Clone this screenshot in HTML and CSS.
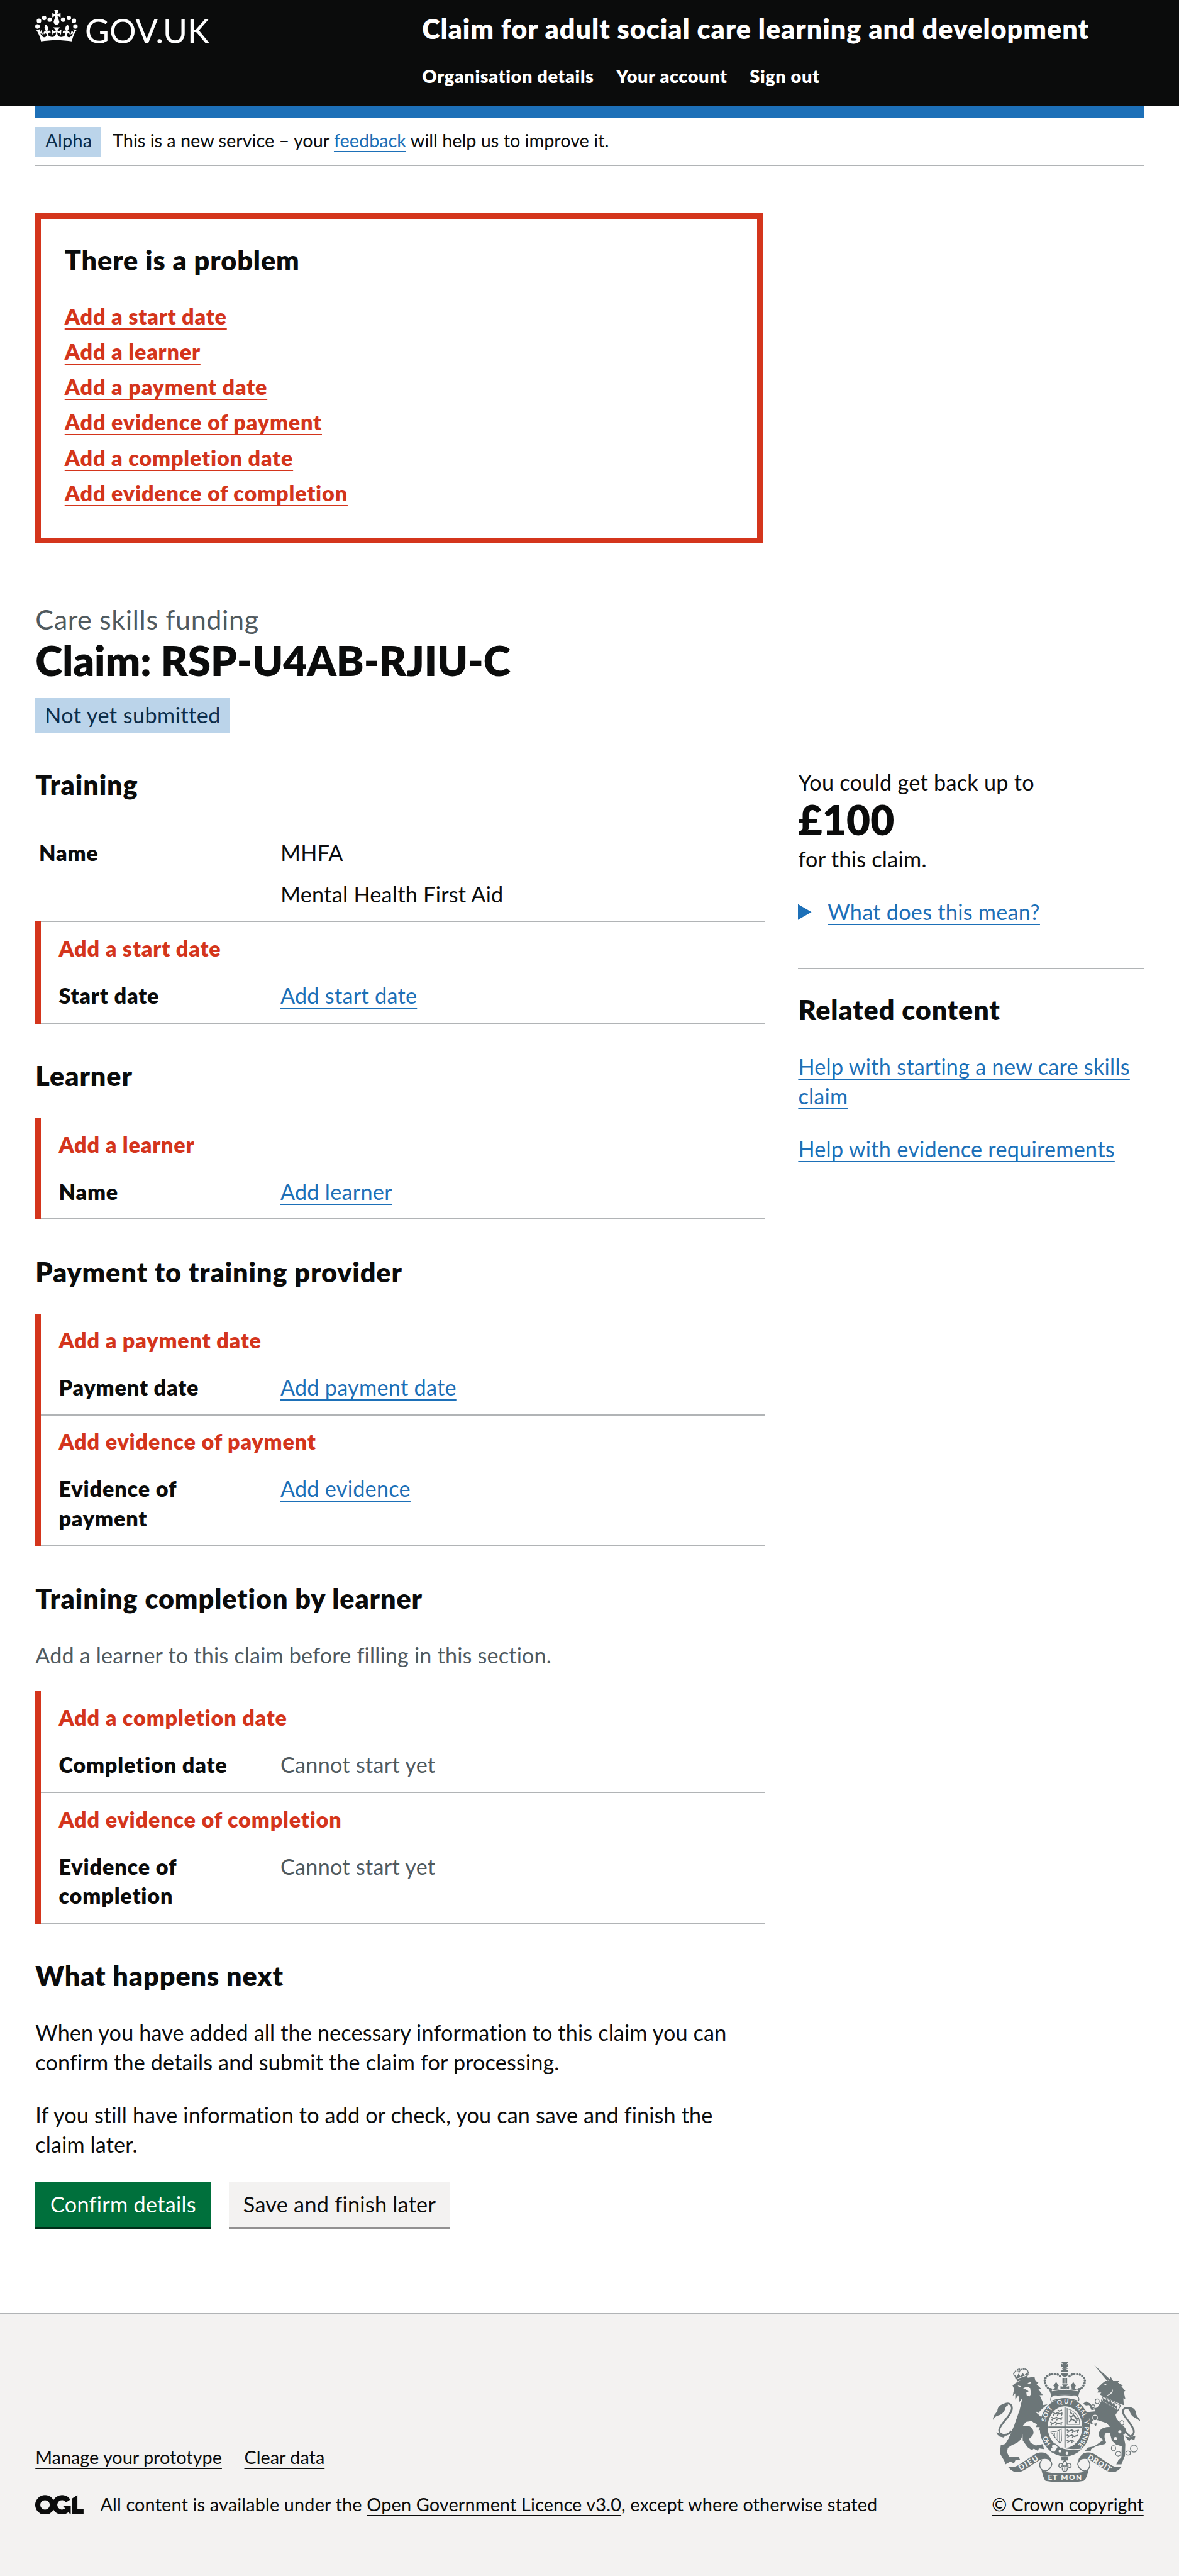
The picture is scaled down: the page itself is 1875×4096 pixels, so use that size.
FILE: index.html
```html
<!DOCTYPE html>
<html lang="en">
<head>
<meta charset="utf-8">
<title>Claim for adult social care learning and development</title>
<link rel="stylesheet" href="styles.css">
</head>
<body>
<header class="header">
  <a class="logo" aria-label="GOV.UK">
    <svg class="logo-svg" viewBox="60 0 924 276" fill="#fff">
      <circle cx="71.500" cy="134.500" r="11.500"/><circle cx="79" cy="106" r="11.500"/><circle cx="105.500" cy="91.500" r="11.500"/><circle cx="134" cy="100" r="11.500"/>
      <circle cx="264.500" cy="134.500" r="11.500"/><circle cx="257" cy="106" r="11.500"/><circle cx="231" cy="91.500" r="11.500"/><circle cx="202" cy="100" r="11.500"/>
      <path transform="translate(65.900 51) scale(6.380)" d="M17 4.700l2.300 1.200V2.500l-2.300.7-.2-.2.9-3h-3.400l.9 3-.2.2c-.1.1-2.300-.7-2.300-.7v3.400L15 4.700c.1.1.1.2.2.2l-1.300 4c-.1.2-.1.4-.1.6 0 1.100.8 2 1.900 2.200h.7c1-.2 1.900-1.100 1.900-2.100 0-.2 0-.4-.1-.6l-1.300-4c-.1-.2 0-.2.1-.3"/>
      <path transform="translate(65.900 18.600) scale(6.380)" d="M16 29.200c4.400 0 8.600.3 12.300.8 1.100-4.500 2.400-7 3.700-8.800l-2.500-.9c.2 1.300.3 1.900 0 2.700-.4-.4-.8-1.100-1.100-2.300l-1.200 4c.7-.5 1.300-.8 2-.9-1.100 2.500-2.600 3.100-3.500 3-1.100-.2-1.700-1.200-1.500-2.100.3-1.200 1.500-1.500 2.100-.1 1.100-2.300-.8-3-2-2.300 1.900-1.900 2.100-3.500.6-5.600-2.100 1.600-2.100 3.200-1.200 5.500-1.200-1.400-3.200-.6-2.500 1.600.9-1.400 2.100-.5 1.900.8-.2 1.100-1.700 2.100-3.500 1.900-2.700-.2-2.900-2.100-2.900-3.600.7-.1 1.900.5 2.900 1.900l.4-4.300c-1.100 1.100-2.100 1.400-3.200 1.400.4-1.200 2.100-3 2.100-3h-5.400s1.700 1.900 2.100 3c-1.100 0-2.100-.2-3.200-1.400l.4 4.300c1-1.400 2.200-2 2.900-1.900-.1 1.500-.2 3.400-2.900 3.600-1.900.2-3.400-.8-3.500-1.900-.2-1.300 1-2.200 1.900-.8.7-2.300-1.200-3-2.500-1.600.9-2.200.9-3.900-1.200-5.500-1.500 2-1.300 3.700.6 5.600-1.200-.7-3.100 0-2 2.300.6-1.400 1.800-1.100 2.100.1.2.9-.3 1.900-1.500 2.100-.9.2-2.400-.5-3.500-3 .6 0 1.200.3 2 .9l-1.200-4c-.3 1.100-.7 1.900-1.100 2.300-.3-.8-.2-1.400 0-2.700l-2.900.9C1.300 23 2.600 25.500 3.700 30c3.700-.5 7.900-.8 12.300-.8"/>
      <text class="logo-text" x="313" y="222" textLength="634" lengthAdjust="spacingAndGlyphs">GOV.UK</text>
    </svg>
  </a>
  <div class="header-content">
    <div class="service">Claim for adult social care learning and development</div>
    <nav class="nav"><a>Organisation details</a><a>Your account</a><a>Sign out</a></nav>
  </div>
</header>
<div class="page">
  <div class="phase">
    <strong class="tag tag-small">Alpha</strong>
    <span class="phase-text">This is a new service – your <a class="link">feedback</a> will help us to improve it.</span>
  </div>
  <section class="errors">
    <h2 class="h2">There is a problem</h2>
    <ul class="error-list">
      <li><a>Add a start date</a></li>
      <li><a>Add a learner</a></li>
      <li><a>Add a payment date</a></li>
      <li><a>Add evidence of payment</a></li>
      <li><a>Add a completion date</a></li>
      <li><a>Add evidence of completion</a></li>
    </ul>
  </section>
  <span class="caption">Care skills funding</span>
  <h1 class="h1">Claim: RSP-U4AB-RJIU-C</h1>
  <strong class="tag tag-large">Not yet submitted</strong>
  <div class="columns">
    <main class="main">
      <h2 class="h2">Training</h2>
      <dl class="list">
        <div class="row plain">
          <dt>Name</dt>
          <dd><p>MHFA</p><p>Mental Health First Aid</p></dd>
        </div>
        <div class="row bad joined"><div class="inner">
          <p class="msg">Add a start date</p>
          <div class="pair"><dt>Start date</dt><dd><a class="link">Add start date</a></dd></div>
        </div></div>
      </dl>
      <h2 class="h2">Learner</h2>
      <dl class="list">
        <div class="row bad"><div class="inner">
          <p class="msg">Add a learner</p>
          <div class="pair"><dt>Name</dt><dd><a class="link">Add learner</a></dd></div>
        </div></div>
      </dl>
      <h2 class="h2">Payment to training provider</h2>
      <dl class="list">
        <div class="row bad"><div class="inner">
          <p class="msg">Add a payment date</p>
          <div class="pair"><dt>Payment date</dt><dd><a class="link">Add payment date</a></dd></div>
        </div></div>
        <div class="row bad"><div class="inner">
          <p class="msg">Add evidence of payment</p>
          <div class="pair"><dt>Evidence of<br>payment</dt><dd><a class="link">Add evidence</a></dd></div>
        </div></div>
      </dl>
      <h2 class="h2">Training completion by learner</h2>
      <p class="hint">Add a learner to this claim before filling in this section.</p>
      <dl class="list list-after-hint">
        <div class="row bad"><div class="inner">
          <p class="msg">Add a completion date</p>
          <div class="pair"><dt>Completion date</dt><dd class="muted">Cannot start yet</dd></div>
        </div></div>
        <div class="row bad"><div class="inner">
          <p class="msg">Add evidence of completion</p>
          <div class="pair"><dt>Evidence of<br>completion</dt><dd class="muted">Cannot start yet</dd></div>
        </div></div>
      </dl>
      <h2 class="h2">What happens next</h2>
      <p class="para">When you have added all the necessary information to this claim you can<br>confirm the details and submit the claim for processing.</p>
      <p class="para">If you still have information to add or check, you can save and finish the<br>claim later.</p>
      <div class="buttons">
        <button class="button">Confirm details</button>
        <button class="button secondary">Save and finish later</button>
      </div>
    </main>
    <aside class="side">
      <p class="amount-text">You could get back up to</p>
      <p class="amount">£100</p>
      <p class="amount-text">for this claim.</p>
      <div class="details"><svg class="arrow" viewBox="0 0 12 14"><path d="M0 0L12 7L0 14Z" fill="#1d70b8"/></svg><a class="link">What does this mean?</a></div>
      <div class="related">
        <h2 class="h2">Related content</h2>
        <p><a class="link">Help with starting a new care skills<br>claim</a></p>
        <p><a class="link">Help with evidence requirements</a></p>
      </div>
    </aside>
  </div>
</div>
<footer class="footer">
  <div class="footer-meta">
    <div class="footer-links"><a>Manage your prototype</a><a>Clear data</a></div>
    <div class="licence">
      <svg class="ogl" viewBox="0 0 483 196" fill="none" stroke="#0b0c0c" stroke-width="50.700"><circle cx="97.800" cy="97.800" r="72.500"/><path d="M329 59A72.500 72.500 0 1 0 318 150"/><path d="M275 105.700h80v87.800h-3z" fill="#0b0c0c" stroke="none"/><path d="M370.800 32.400L421.500 .1V142.800H483V193.500H370.800z" fill="#0b0c0c" stroke="none"/></svg>
      <span class="licence-text">All content is available under the <a>Open Government Licence v3.0</a>, except where otherwise stated</span>
    </div>
  </div>
  <div class="copyright">
    <svg class="crest" viewBox="132 132 750 612" fill="#6c7678">
      <defs><path id="garter" d="M499 581A100 119 0 0 1 499 343A100 119 0 0 1 499 581"/></defs>
      <!-- lion -->
      <path d="M247 238L295 213L344 206L348 226L364 236L354 244L377 266L364 270L386 299L370 300L384 330L387 350L410 346L382 370L362 392L392 430L408 455L411 486L376 492L386 476L364 478L373 462L350 462L357 448L338 438L330 431L300 436L284 456L312 455C338 466 346 490 332 508L316 522L324 542L350 556L386 549L392 574L366 570L362 584L340 572L330 580L308 564L284 530L283 498C280 528 258 542 232 552L208 568L204 590L214 612L262 613L270 628L246 632L240 646L220 638L196 652L190 634L168 596L172 554L195 548L212 520L240 455L268 375L282 315L266 335L262 300L246 322L246 290L233 303L240 268L232 250Z"/>
      <path d="M258 250l18 4-10 6zM308 238l20-6-8 12zM286 264l20-8 16 8 4 30-8 12-14-6-2-14 12-6-12-8z" fill="#f3f2f1"/>
      <path d="M350 384L384 412L404 450" fill="none" stroke="#f3f2f1" stroke-width="4"/>
      <path d="M252 218L306 200L310 210L256 230Z"/><path d="M247 216L240 194L254 206L262 190L272 204L284 186L292 198L306 184L305 196L251 216Z"/>
      <path d="M256 212Q226 196 246 178Q262 174 266 184Q272 162 300 168Q322 182 304 204M265 162V186M256 170L276 168" fill="none" stroke="#6c7678" stroke-width="6" stroke-dasharray="6 2.500"/>
      <path d="M226 482C206 512 162 506 164 478C166 446 230 402 229 366C228 340 202 336 186 350" fill="none" stroke="#6c7678" stroke-width="9"/>
      <path d="M208 346C180 338 156 356 155 378C148 394 134 398 132 426C144 398 170 408 184 388C198 376 190 360 208 352ZM150 488L176 500L200 496L188 516L166 510L154 500Z"/>
      <!-- unicorn -->
      <path d="M648 147L732 222L714 228Z"/>
      <path d="M732 206L744 228L774 228L768 236L794 250L786 254L806 278L798 282L806 318L796 316L798 350L778 344L690 304L676 296L684 286L664 286L670 274L661 266L688 240L704 228L720 228ZM686 328L772 376L756 400L762 420L784 448L806 466L812 490L796 500L806 550L804 608L786 652L760 652L770 632L786 616L788 560L760 552L738 532L728 494C706 482 690 500 708 540L704 548L660 558L632 574L630 584L600 584L616 566L648 560L694 528L670 508C668 478 690 460 728 462L712 442L668 428L656 426L636 430L640 446L662 442L656 458L646 446L630 446L624 420L614 412L606 386L650 382L654 372L634 376L622 350L606 352L590 344L606 332L628 342L644 368L664 362Z"/>
      <path d="M696 246l16-4-8 10zM742 268c4 22-12 30-36 36 20-10 32-18 36-36z" fill="#f3f2f1"/>
      <path d="M692 306L782 352L768 378L684 328Z" fill="#f3f2f1" stroke="#6c7678" stroke-width="4"/><path d="M690 328L694 312L704 324L714 318L720 334L732 328L738 344L750 338L754 354L766 350L764 370Z"/>
      <path d="M784 454C800 482 818 500 832 510C862 496 848 470 832 446C812 416 786 394 796 374C806 358 826 364 838 372" fill="none" stroke="#6c7678" stroke-width="9"/>
      <path d="M814 362C846 356 862 376 862 398C866 412 882 416 881 434C868 416 846 416 834 396C828 386 832 376 814 368ZM804 510L828 514L858 506L852 528L834 522L826 534Z"/>
      <g fill="#f3f2f1"><circle cx="778" cy="486" r="8"/><circle cx="756" cy="521" r="8"/></g>
      <g fill="none" stroke="#6c7678" stroke-width="4"><ellipse cx="663" cy="331" rx="10" ry="12"/><ellipse cx="642" cy="356" rx="9" ry="8"/><ellipse cx="652" cy="415" rx="12" ry="14" stroke="#f3f2f1"/><ellipse cx="788" cy="441" rx="11" ry="12"/><ellipse cx="746" cy="570" rx="11" ry="13"/><ellipse cx="770" cy="598" rx="13" ry="11"/><ellipse cx="820" cy="594" rx="12" ry="10"/><circle cx="850" cy="572" r="18"/></g>
      <!-- royal crown -->
      <path d="M481 132h34l-8 12 8-4v18l-10-4 8 12h-30l8-12-11 4v-18l9 4zM479 182Q482 166 497 166Q512 166 517 182ZM479 187H517Q514 206 498 206Q482 206 479 187ZM486 212H496V239H486ZM501 212H510V239H501ZM484 245H514L506 257L520 254V272L507 265L512 278H486L491 265L476 272V254L491 257Z"/>
      <g fill="none" stroke="#6c7678" stroke-width="12" stroke-linecap="round" stroke-dasharray=".1 13.600"><path d="M412 262C382 232 396 196 436 193Q466 190 476 206"/><path d="M584 262C614 232 600 196 560 193Q530 190 520 206"/></g>
      <path d="M410 262L430 264L436 274L448 262L440 252L454 232L467 252L460 264L474 276H522L534 264L528 252L541 232L554 252L548 264L560 274L566 264L586 262Q572 278 567 303Q498 291 429 303Q424 278 410 262Z"/><path d="M432 278Q498 266 564 278" fill="none" stroke="#f3f2f1" stroke-width="4"/>
      <path d="M434 304Q420 318 430 330Q498 304 566 330Q576 318 562 304Q498 292 434 304Z" fill="#f3f2f1" stroke="#6c7678" stroke-width="4"/>
      <!-- garter and shield -->
      <ellipse cx="499" cy="463" rx="129" ry="148"/><ellipse cx="499" cy="462" rx="88" ry="106" fill="#f3f2f1"/>
      <g class="garter-text"><text><textPath href="#garter" startOffset="82" textLength="46">HO</textPath></text><text><textPath href="#garter" startOffset="198" textLength="78">SOIT</textPath></text><text><textPath href="#garter" startOffset="306" textLength="72">QUI</textPath></text><text><textPath href="#garter" startOffset="398" textLength="70">MAL</textPath></text><text><textPath href="#garter" startOffset="484">Y</textPath></text><text><textPath href="#garter" startOffset="514" textLength="104">PENSE</textPath></text></g>
      <path d="M414 462H584M499 358V566" stroke="#6c7678" stroke-width="6"/>
      <g fill="none" stroke="#6c7678" stroke-width="6"><path d="M440 388l10 7 12-6 10 7 14-6M444 396l-4 9M464 396l-4 9M484 395l-4 9M430 412l12 7 14-6 12 7 18-6M436 420l-4 8M460 420l-4 8M482 419l-4 8M424 437l12 7 14-6 12 7 24-6M432 445l-4 8M456 445l-4 8M482 444l-4 8M462 376l8 5 14-5"/><path d="M508 476l12 7 14-6 12 7 24-6M516 484l-4 8M540 484l-4 8M564 484l-4 8M508 502l12 7 14-6 12 7 18-6M516 510l-4 8M540 510l-4 8M508 528l12 7 14-6 12 7M516 536l-4 8M536 536l-4 8"/><path d="M510 368V448H574Q574 390 510 368Z" stroke-width="4"/><path d="M520 436l14-14 18 10 4 10M532 424l-2-16 16-4 10 14 12 0M532 410l-12-6M540 406l2-14M558 418l2 14M524 384l10 12" stroke-width="7"/><path d="M426 482Q450 492 480 472L482 534L472 544L426 486M438 492V506M446 492V518M454 490V528M462 486V534M471 481V540" stroke-width="3.500"/></g>
      <path d="M424 566Q470 604 560 580L540 596Q500 620 450 594Z"/><path d="M462 556Q500 586 596 572" fill="none" stroke="#f3f2f1" stroke-width="4"/>
      <circle cx="473" cy="585" r="7" fill="#f3f2f1"/><circle cx="509" cy="595" r="7" fill="#f3f2f1"/>
      <path d="M462 562C448 536 424 552 432 566C416 572 424 596 446 588" fill="#f3f2f1" stroke="#6c7678" stroke-width="5"/>
      <path d="M481 614H516V632H481Z"/><path d="M498 630C484 646 486 654 492 664C486 638 464 646 468 662C472 672 484 666 482 660H514C512 666 526 672 530 662C532 646 510 638 504 664C510 654 512 646 498 630ZM486 668Q482 686 498 690Q514 686 510 668M498 664V690" fill="#f3f2f1" stroke="#6c7678" stroke-width="5"/>
      <!-- ribbon -->
      <path d="M208 664Q240 670 262 656L340 604Q368 584 402 596Q426 610 430 636Q410 620 380 626Q366 630 300 676Q254 706 222 678ZM788 664Q756 670 734 656L656 604Q628 584 594 596Q570 610 566 636Q586 620 616 626Q630 630 696 676Q742 706 774 678Z"/>
      <path d="M382 628Q362 650 376 674Q384 684 398 686Q426 680 432 652Q432 638 418 628M614 628Q634 650 620 674Q612 684 598 686Q570 680 564 652Q564 638 578 628" fill="none" stroke="#6c7678" stroke-width="5"/>
      <path d="M378 674Q390 698 498 698Q606 698 620 674Q612 720 594 736Q498 752 400 736Q388 722 378 674Z"/>
      <g class="motto"><text x="412" y="731" textLength="48">ET</text><text x="478" y="731" textLength="106">MON</text><text transform="translate(273 684) rotate(-31)" textLength="108">DIEU</text><text transform="translate(611 622) rotate(31)" textLength="132">DROIT</text></g>
    </svg>
    <a>© Crown copyright</a>
  </div>
</footer>
</body>
</html>
```
FILE: styles.css
```css
/* 1rem is ten layout units; the page is 100rem wide */
html { font-size: 18.75px; background: #f3f2f1; }
* { box-sizing: border-box; }
body { margin: 0; background: #fff; color: #0b0c0c; font: 400 1.825rem/2.5rem Lato, "Open Sans", sans-serif; letter-spacing: .008em; width: 100rem; font-variant-ligatures: none; }
h1, h2, p, ul, dl, dd, dt { margin: 0; padding: 0; }
a { text-decoration: underline; text-decoration-thickness: 2px; text-underline-offset: .3rem; text-decoration-skip-ink: none; }
.link { color: #1d70b8; }

.header { display: flex; height: 9rem; background: #0b0c0c; color: #fff; padding-left: 3rem; }
.header a { text-decoration: none; }
.logo { width: 32.8rem; }
.logo-svg { display: block; width: 15.4rem; height: 4.6rem; overflow: visible; }
.logo-text { font: 400 174px Lato, sans-serif; letter-spacing: 0; }
.service { font-size: 2.3rem; line-height: 3rem; font-weight: 800; letter-spacing: .022em; padding-top: .9rem; white-space: nowrap; }
.nav { display: flex; gap: 1.9rem; font-size: 1.54rem; line-height: 2rem; font-weight: 800; letter-spacing: .021em; margin-top: 1.6rem; }

.page { padding: 0 3rem; }
.phase { display: flex; align-items: flex-start; border-top: 1rem solid #1d70b8; border-bottom: 2px solid #b1b4b6; height: 5.1rem; padding-top: .8rem; font-size: 1.54rem; }
.phase-text { line-height: 2.25rem; margin-left: .95rem; letter-spacing: -.001em; }
.tag { display: block; font-weight: 400; background: #bbd4ea; color: #0c2d4a; }
.tag-small { height: 2.5rem; line-height: 2.25rem; padding: 0 .85rem; width: 5.6rem; }
.tag-large { width: 16.5rem; height: 3rem; line-height: 2.85rem; padding-left: .8rem; margin-top: 1.3rem; letter-spacing: .013em; }

.errors { width: 61.7rem; height: 28rem; margin-top: 4rem; border: .5rem solid #d4351c; padding: 1.95rem 2rem; }
.h2 { font-size: 2.3rem; line-height: 3rem; font-weight: 800; letter-spacing: .021em; }
.error-list { list-style: none; margin-top: 2.05rem; font-weight: 800; letter-spacing: .023em; color: #d4351c; }
.error-list li { margin-bottom: .5rem; }
.caption { display: block; margin-top: 4.9rem; font-size: 2.3rem; line-height: 3rem; color: #505a5f; letter-spacing: .014em; }
.h1 { font-size: 3.5rem; line-height: 3.9rem; font-weight: 800; letter-spacing: -.001em; }

.columns { display: grid; grid-template-columns: 61.9rem 29.3rem; column-gap: 2.8rem; margin-top: 2.8rem; }
.list { margin: 2.1rem 0 2.9rem; }
.list-after-hint { margin-top: 1.8rem; }
.row.plain { display: grid; grid-template-columns: 20.5rem 1fr; padding: 1rem 0 1rem .3rem; border-bottom: 2px solid #b1b4b6; }
.plain p + p { margin-top: 1rem; }
.row.bad { border-left: .5rem solid #d4351c; }
.row.joined { margin-top: -2px; padding-top: 2px; }
.inner { border-bottom: 2px solid #b1b4b6; padding: 1rem 0 1rem 1.5rem; }
.msg { color: #d4351c; font-weight: 800; letter-spacing: .023em; margin-bottom: 1.5rem; }
.pair { display: grid; grid-template-columns: 18.8rem 1fr; }
dt { font-weight: 800; letter-spacing: .024em; }
.muted, .hint { color: #505a5f; }
.hint { margin-top: 2.1rem; letter-spacing: .005em; }
.para { margin-top: 2rem; white-space: nowrap; letter-spacing: .004em; }
.h2 + .para { margin-top: 2.1rem; }
.buttons { display: flex; gap: 1.5rem; margin-top: 1.9rem; padding-bottom: 7.3rem; }
.button { font: inherit; letter-spacing: inherit; color: #fff; background: #00703c; border: 0; box-shadow: 0 .2rem 0 #002d18; height: 3.8rem; width: 14.9rem; padding: .05rem 0 0; text-align: center; white-space: nowrap; }
.secondary { width: 18.8rem; background: #f3f2f1; color: #0b0c0c; box-shadow: 0 .2rem 0 #929191; }

.side { white-space: nowrap; padding-top: .1rem; }
.amount { font-size: 3.5rem; line-height: 3.5rem; font-weight: 800; margin-top: .15rem; }
.amount + .amount-text { margin-top: .35rem; }
.details { display: flex; align-items: center; margin-top: 2rem; }
.arrow { width: 1.15rem; height: 1.4rem; margin-right: 1.35rem; }
.related { border-top: 2px solid #b1b4b6; margin-top: 3.5rem; padding-top: 1.9rem; }
.related p { margin-top: 2rem; }
.related .h2 + p { margin-top: 2.1rem; }

.footer { display: flex; justify-content: space-between; align-items: flex-end; height: 22.35rem; padding: 0 3rem 5.1rem; border-top: 2px solid #b1b4b6; background: #f3f2f1; font-size: 1.54rem; line-height: 2rem; white-space: nowrap; letter-spacing: .005em; }
.footer-links { display: flex; gap: 1.9rem; margin-bottom: 2rem; letter-spacing: -.001em; }
.licence { display: flex; align-items: center; }
.ogl { width: 4.1rem; height: 1.7rem; margin-right: 1.4rem; }
.copyright { display: flex; flex-direction: column; align-items: flex-end; letter-spacing: -.001em; }
.crest { width: 12.5rem; height: 10.2rem; margin: 0 .3rem .9rem 0; }
.garter-text { font: 700 32px Lato, sans-serif; fill: #f3f2f1; letter-spacing: 0; }
.motto { font: 900 38px Lato, sans-serif; fill: #f3f2f1; letter-spacing: 0; }
```
